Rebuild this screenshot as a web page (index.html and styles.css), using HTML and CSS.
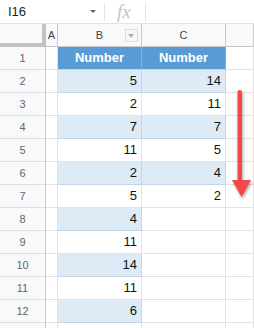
FILE: index.html
```html
<!DOCTYPE html>
<html lang="en">
<head>
    <meta charset="UTF-8">
    <title>Sheet</title>
    <link rel="stylesheet" href="styles.css">
</head>
<body>
    <div class="toolbar">
        <div class="namebox">I16</div>
        <span class="caret"></span>
        <span class="sep"></span>
        <span class="fx">fx</span>
        <span class="sep"></span>
    </div>

    <div class="sheet">
        <div class="cell corner"></div>
        <div class="cell colhead">A</div>
        <div class="cell colhead">B<span class="filter"></span></div>
        <div class="cell colhead">C</div>
        <div class="cell colhead"></div>

        <div class="cell rh">1</div><div class="cell"></div><div class="cell head">Number</div><div class="cell head">Number</div><div class="cell"></div>
        <div class="cell rh">2</div><div class="cell"></div><div class="cell num band">5</div><div class="cell num band">14</div><div class="cell"></div>
        <div class="cell rh">3</div><div class="cell"></div><div class="cell num">2</div><div class="cell num">11</div><div class="cell"></div>
        <div class="cell rh">4</div><div class="cell"></div><div class="cell num band">7</div><div class="cell num band">7</div><div class="cell"></div>
        <div class="cell rh">5</div><div class="cell"></div><div class="cell num">11</div><div class="cell num">5</div><div class="cell"></div>
        <div class="cell rh">6</div><div class="cell"></div><div class="cell num band">2</div><div class="cell num band">4</div><div class="cell"></div>
        <div class="cell rh">7</div><div class="cell"></div><div class="cell num">5</div><div class="cell num">2</div><div class="cell"></div>
        <div class="cell rh">8</div><div class="cell"></div><div class="cell num band">4</div><div class="cell"></div><div class="cell"></div>
        <div class="cell rh">9</div><div class="cell"></div><div class="cell num">11</div><div class="cell"></div><div class="cell"></div>
        <div class="cell rh">10</div><div class="cell"></div><div class="cell num band">14</div><div class="cell"></div><div class="cell"></div>
        <div class="cell rh">11</div><div class="cell"></div><div class="cell num">11</div><div class="cell"></div><div class="cell"></div>
        <div class="cell rh">12</div><div class="cell"></div><div class="cell num band">6</div><div class="cell"></div><div class="cell"></div>
        <div class="cell rh"></div><div class="cell"></div><div class="cell"></div><div class="cell"></div><div class="cell"></div>
    </div>

    <!-- red arrow drawn over the sheet -->
    <svg class="arrow" width="26" height="118" viewBox="0 0 26 118">
        <rect x="7.5" y="4" width="4.5" height="92" rx="2.2" fill="#f44848"/>
        <polygon points="2,94 21,94 11.5,111" fill="#f44848"/>
    </svg>
</body>
</html>
```

FILE: styles.css
```css
body {
    margin: 0;
    width: 254px;
    height: 328px;
    overflow: hidden;
    font-family: "Liberation Sans", Arial, sans-serif;
    background: #fff;
    position: relative;
}
.toolbar {
    height: 23px;
    border-bottom: 1px solid #e1e1e1;
    display: flex;
    align-items: center;
}
.namebox {
    width: 80px;
    padding-left: 8px;
    font-size: 13px;
    color: #222;
}
.caret {
    width: 0;
    height: 0;
    margin-left: 2px;
    border-left: 3px solid transparent;
    border-right: 3px solid transparent;
    border-top: 3px solid #666;
}
.sep {
    width: 1px;
    height: 18px;
    background: #e3e3e3;
    margin-left: 8px;
}
.fx {
    font-family: "Liberation Serif", "Times New Roman", serif;
    font-style: italic;
    font-size: 19px;
    line-height: 20px;
    color: #c4c4c4;
    margin-left: 12px;
    margin-right: 6px;
}
.sheet {
    display: grid;
    grid-template-columns: 46px 12px 84px 84px 1fr;
    grid-auto-rows: 23px;
    height: 304px;
    overflow: hidden;
}
.cell {
    box-sizing: border-box;
    border-right: 1px solid #e2e2e2;
    border-bottom: 1px solid #e2e2e2;
    font-size: 13px;
    color: #111;
    line-height: 22px;
}
.corner {
    background: #f8f9fa;
    border-right: 4px solid #c2c2c2;
    border-bottom: 4px solid #c2c2c2;
}
.colhead {
    background: #f8f9fa;
    border-bottom: 1px solid #c8c8c8;
    border-right: 1px solid #c8c8c8;
    text-align: center;
    font-size: 11px;
    color: #444;
    position: relative;
}
.filter {
    position: absolute;
    left: 67px;
    top: 5px;
    width: 11px;
    height: 11px;
    border: 1px solid #dcdcdc;
    background: #f8f8f8;
}
.filter::after {
    content: "";
    position: absolute;
    left: 2px;
    top: 4px;
    border-left: 3.5px solid transparent;
    border-right: 3.5px solid transparent;
    border-top: 4px solid #b0b0b0;
}
.rh {
    background: #f8f9fa;
    border-right: 1px solid #c8c8c8;
    border-bottom: 1px solid #dedede;
    text-align: center;
    font-size: 11px;
    color: #666;
}
.head {
    background: #5b9bd5;
    border-right-color: #80b2df;
    border-bottom-color: #c5d7ea;
    color: #fff;
    font-weight: bold;
    text-align: center;
}
.num {
    text-align: right;
    padding-right: 4px;
}
.band {
    background: #ddebf7;
    border-right-color: #c5d5e6;
    border-bottom-color: #c5d5e6;
}
.arrow {
    position: absolute;
    left: 230px;
    top: 86px;
    filter: drop-shadow(1px 2px 1.5px rgba(0, 0, 0, 0.35));
}
```
